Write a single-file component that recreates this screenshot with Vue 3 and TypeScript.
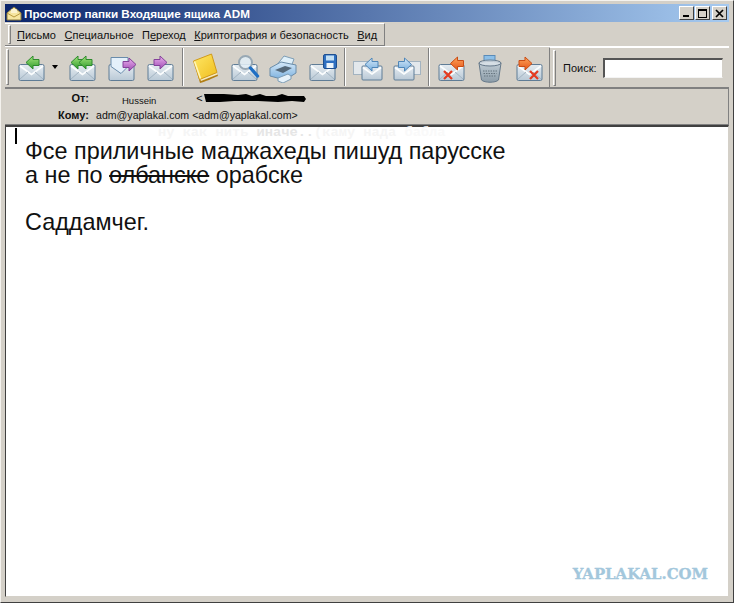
<script setup lang="ts">
const menu = [
  { before: '', key: 'П', after: 'исьмо' },
  { before: '', key: 'С', after: 'пециальное' },
  { before: 'П', key: 'е', after: 'реход' },
  { before: '', key: 'К', after: 'риптография и безопасность' },
  { before: '', key: 'В', after: 'ид' },
]

const groups = [
  ['reply', 'arrow', 'replyall', 'fwdinline', 'forward'],
  ['book', 'find', 'print', 'save'],
  ['prev', 'next'],
  ['delprev', 'trash', 'delnext'],
]
</script>

<template>
  <div class="window">
    <svg class="defs" width="0" height="0">
      <defs>
        <linearGradient id="gEnv" x1="0" y1="0" x2="0" y2="1">
          <stop offset="0" stop-color="#e6ecf1" />
          <stop offset="1" stop-color="#b9c9d6" />
        </linearGradient>
        <linearGradient id="gGreen" x1="0" y1="0" x2="0" y2="1">
          <stop offset="0" stop-color="#a6e67e" />
          <stop offset="1" stop-color="#2f9a2c" />
        </linearGradient>
        <linearGradient id="gPurple" x1="0" y1="0" x2="0" y2="1">
          <stop offset="0" stop-color="#eab0ee" />
          <stop offset="1" stop-color="#a04cb4" />
        </linearGradient>
        <linearGradient id="gBlue" x1="0" y1="0" x2="0" y2="1">
          <stop offset="0" stop-color="#d5e9f9" />
          <stop offset="1" stop-color="#78aedd" />
        </linearGradient>
        <linearGradient id="gOrange" x1="0" y1="0" x2="0" y2="1">
          <stop offset="0" stop-color="#ffa55a" />
          <stop offset="1" stop-color="#e4551a" />
        </linearGradient>
        <linearGradient id="gBook" x1="0" y1="0" x2="1" y2="1">
          <stop offset="0" stop-color="#ffe866" />
          <stop offset="1" stop-color="#efbd1e" />
        </linearGradient>
        <linearGradient id="gBin" x1="0" y1="0" x2="0" y2="1">
          <stop offset="0" stop-color="#c4d0d8" />
          <stop offset="1" stop-color="#8c9ca8" />
        </linearGradient>

        <g id="envShape">
          <rect x="4" y="13.5" width="25" height="16" rx="1.5" fill="url(#gEnv)" stroke="#5f7c96" />
          <path d="M5 15l11.5 8.5L28 15" fill="none" stroke="#fbfdfe" stroke-width="1.7" />
          <path d="M5 28l8-7M28 28l-8-7" fill="none" stroke="#a3b4c2" />
        </g>
        <g id="envSmall">
          <rect x="0.5" y="0.5" width="20" height="14" rx="1" fill="url(#gEnv)" stroke="#5f7c96" />
          <path d="M1.5 2l9 6.5 9-6.5" fill="none" stroke="#fbfdfe" stroke-width="1.6" />
        </g>
        <path id="arrL" d="M0 6.5L7 0v3.5h6v6H7V13z" stroke-linejoin="round" />
        <path id="arrR" d="M13 6.5L6 0v3.5H0v6h6V13z" stroke-linejoin="round" />
        <path id="cross" d="M0 0l8 8M8 0L0 8" fill="none" stroke="#e5391f" stroke-width="2.2" />

        <symbol id="reply" viewBox="0 0 32 32">
          <use href="#envShape" />
          <use href="#arrL" x="11" y="5" fill="url(#gGreen)" stroke="#2d8a2d" />
        </symbol>
        <symbol id="replyall" viewBox="0 0 32 32">
          <use href="#envShape" />
          <use href="#arrL" x="5" y="5" fill="url(#gGreen)" stroke="#2d8a2d" />
          <use href="#arrL" x="13" y="5" fill="url(#gGreen)" stroke="#2d8a2d" />
        </symbol>
        <symbol id="fwdinline" viewBox="0 0 32 32">
          <rect x="4" y="13.5" width="25" height="16" rx="1.5" fill="url(#gEnv)" stroke="#5f7c96" />
          <path d="M6 6.5h17v9l-7 7-10-7z" fill="#e4f0fa" stroke="#6a8cab" />
          <use href="#arrR" x="18" y="7" fill="url(#gPurple)" stroke="#84429a" />
        </symbol>
        <symbol id="forward" viewBox="0 0 32 32">
          <use href="#envShape" />
          <use href="#arrR" x="10" y="5" fill="url(#gPurple)" stroke="#84429a" />
        </symbol>
        <symbol id="book" viewBox="0 0 32 32">
          <path d="M5 11l6 21c5-1 13-5 18-7l-1-3z" fill="#b17e14" />
          <path d="M11 28l17-6.5.6 2L12 30z" fill="#f4e8c0" />
          <path d="M4.500 10L22.500 3 28 21.500 10.500 28.500z" fill="url(#gBook)" stroke="#d09a1c" />
          <path d="M5.500 10.500l6 17" stroke="#fff6b8" stroke-width="1.6" />
        </symbol>
        <symbol id="find" viewBox="0 0 32 32">
          <use href="#envShape" />
          <circle cx="17.500" cy="11.500" r="6.500" fill="#e2eef6" fill-opacity=".88" stroke="#98a8b4" stroke-width="2" />
          <path d="M22.500 17l7 8" stroke="#1f6fc4" stroke-width="3.400" stroke-linecap="round" />
        </symbol>
        <symbol id="print" viewBox="0 0 32 32">
          <path d="M9 15L17 5l10 3-3 8z" fill="#dff0fa" stroke="#7e9db5" />
          <path d="M3 17l11-6 15 3v8l-11 7-15-4z" fill="url(#gBlue)" stroke="#6a8ca8" stroke-linejoin="round" />
          <path d="M8 19l10-4 7 2-9 5z" fill="#55697a" />
          <path d="M11 27l10-4 3 2v3l-8 4-5-2z" fill="#e7f2fa" stroke="#7e9db5" />
        </symbol>
        <symbol id="save" viewBox="0 0 32 32">
          <use href="#envShape" />
          <rect x="17.500" y="3.500" width="13" height="14" rx="1.500" fill="#2f6fc0" stroke="#1e4f90" />
          <rect x="20" y="4.500" width="8" height="5" fill="#c4e0f4" />
          <rect x="20.500" y="12" width="7" height="5" fill="#edf4fa" />
        </symbol>
        <symbol id="prev" viewBox="0 0 32 32">
          <rect x="2.500" y="10.500" width="16" height="13" fill="#e3e8ec" stroke="#a3b3c0" />
          <use href="#envSmall" x="10.500" y="14.500" />
          <use href="#arrL" x="14" y="7" fill="url(#gBlue)" stroke="#4f86b8" />
        </symbol>
        <symbol id="next" viewBox="0 0 32 32">
          <rect x="14.500" y="10.500" width="16" height="13" fill="#e3e8ec" stroke="#a3b3c0" />
          <use href="#envSmall" x="3.500" y="14.500" />
          <use href="#arrR" x="8.500" y="7" fill="url(#gBlue)" stroke="#4f86b8" />
        </symbol>
        <symbol id="delprev" viewBox="0 0 32 32">
          <use href="#envShape" />
          <use href="#arrL" x="15.500" y="6" fill="url(#gOrange)" stroke="#c94c14" />
          <use href="#cross" x="9" y="20" />
        </symbol>
        <symbol id="trash" viewBox="0 0 32 32">
          <rect x="10" y="4.500" width="11" height="11" fill="#8cbfe8" stroke="#5a8bb8" />
          <path d="M5 12c3-2 19-2 22 0l-2.500 17c-3 3-14 3-17 0z" fill="url(#gBin)" stroke="#66798a" />
          <ellipse cx="16" cy="12" rx="11" ry="3" fill="#dfe7ec" fill-opacity=".7" stroke="#66798a" />
          <path d="M9 20h14M9.500 22.500h13M10 25h12" stroke="#66757f" stroke-dasharray="1.500 1" />
        </symbol>
        <symbol id="delnext" viewBox="0 0 32 32">
          <use href="#envShape" />
          <use href="#arrR" x="6" y="6" fill="url(#gOrange)" stroke="#c94c14" />
          <use href="#cross" x="17" y="20" />
        </symbol>
      </defs>
    </svg>

    <div class="titlebar">
      <svg class="title-ico" viewBox="0 0 16 16">
        <path d="M1 8l7-6 7 6v7H1z" fill="#f6e6a0" stroke="#8a7a40" />
        <path d="M1 8l7 4 7-4" fill="none" stroke="#b89a40" />
        <path d="M5 7h6M5 5h6" stroke="#fff" />
      </svg>
      <span class="title">Просмотр папки Входящие ящика ADM</span>
      <div class="win-btns">
        <button class="wbtn"><i class="min"></i></button>
        <button class="wbtn"><i class="max"></i></button>
        <button class="wbtn close">
          <svg viewBox="0 0 9 9" width="9" height="9"><path d="M1 1l7 7M8 1L1 8" stroke="#000" stroke-width="1.7" /></svg>
        </button>
      </div>
    </div>

    <div class="menu-row">
      <div class="menubar">
        <span class="handle"></span>
        <span v-for="m in menu" :key="m.after" class="menu-item">{{ m.before }}<u>{{ m.key }}</u>{{ m.after }}</span>
      </div>
    </div>

    <div class="toolbar">
      <div class="tools">
        <span class="handle tall"></span>
        <template v-for="(g, i) in groups" :key="i">
          <span v-if="i > 0" class="sep"></span>
          <div class="group">
            <template v-for="id in g" :key="id">
              <span v-if="id === 'arrow'" class="drop"></span>
              <svg v-else class="ico"><use :href="'#' + id" /></svg>
            </template>
          </div>
        </template>
      </div>
      <div class="search">
        <span class="handle tall"></span>
        <label>Поиск:</label>
        <input class="search-input" type="text" />
      </div>
    </div>

    <div class="head">
      <b>От:</b>
      <span class="from">
        <span class="name">Hussein</span>
        <span class="addr">&lt;</span>
        <svg class="scrib" viewBox="0 0 102 10" width="102" height="10">
          <path d="M0 1h20l14 1 8-1 6 2 8-2 6 2h10l6-2 6 2h16l2 3-2 3-12-1-14 1-20-1H30l-14 1H2z" fill="#000" />
        </svg>
      </span>
      <b>Кому:</b>
      <span class="to">adm@yaplakal.com &lt;adm@yaplakal.com&gt;</span>
    </div>

    <div class="body">
      <i class="caret"></i>
      <div class="ghost">ну как нить <em>иначе..</em>(каму нада <small>бабла</small></div>
      <p>Фсе приличные маджахеды пишуд парусске</p>
      <p>а не по <s>олбанске</s> орабске</p>
      <p class="sign">Саддамчег.</p>
      <span class="mark">YAPLAKAL.COM</span>
    </div>
  </div>
</template>

<style>
html, body { margin: 0; background: #d4d0c8; }
</style>

<style scoped>
.window {
  box-sizing: border-box;
  width: 734px;
  height: 603px;
  overflow: hidden;
  display: flex;
  flex-direction: column;
  padding: 3px 4px 5px 4px;
  background: #d4d0c8;
  border-top: 1px solid #f4f2ee;
  border-left: 1px solid #f4f2ee;
  border-right: 1px solid #404040;
  border-bottom: 1px solid #404040;
  font-family: "Liberation Sans", Arial, sans-serif;
  font-size: 11px;
  color: #111;
}
.defs { display: block; height: 0; }

.titlebar {
  flex: none;
  height: 18px;
  display: flex;
  align-items: center;
  padding: 0 2px 0 1px;
  background: linear-gradient(90deg, #0a246a, #a6caf0);
}
.title-ico { width: 16px; height: 16px; flex: none; }
.title {
  margin-left: 2px;
  font-size: 11.7px;
  font-weight: bold;
  color: #fff;
  white-space: nowrap;
}
.win-btns { margin-left: auto; display: flex; gap: 1px; }
.wbtn {
  box-sizing: border-box;
  width: 15px;
  height: 14px;
  padding: 0;
  display: flex;
  align-items: center;
  justify-content: center;
  background: #d4d0c8;
  border: 1px solid;
  border-color: #fff #404040 #404040 #fff;
}
.wbtn.close { margin-left: 1px; }
.min { display: block; width: 6px; height: 2px; background: #000; margin-top: 6px; margin-right: 2px; }
.max { display: block; box-sizing: border-box; width: 9px; height: 9px; border: 1px solid #000; border-top-width: 2px; }

.menu-row {
  flex: none;
  box-sizing: border-box;
  height: 25px;
  display: flex;
  align-items: flex-end;
  border-bottom: 1px solid #fff;
}
.menubar {
  height: 23px;
  width: 380px;
  box-sizing: border-box;
  display: flex;
  align-items: center;
  padding-left: 3px;
  border-top: 1px solid #fff;
  border-right: 1px solid #808080;
  border-bottom: 1px solid #808080;
}
.handle {
  flex: none;
  display: block;
  width: 1px;
  height: 17px;
  border: 1px solid;
  border-color: #fff #808080 #808080 #fff;
  margin-right: 6px;
}
.handle.tall { height: 34px; margin-right: 2px; }
.menu-item { margin-right: 8.5px; white-space: nowrap; }

.toolbar {
  flex: none;
  box-sizing: border-box;
  height: 42px;
  display: flex;
  align-items: center;
  border-bottom: 2px solid #808080;
}
.tools { display: flex; align-items: center; flex: none; width: 541px; padding-left: 1px; box-sizing: border-box; }
.group { display: flex; align-items: center; }
.ico { width: 32px; height: 32px; margin: 0 3.5px; flex: none; }
.drop {
  flex: none;
  width: 0;
  height: 0;
  margin: 0 4px 0 2px;
  border: 3px solid transparent;
  border-top: 4px solid #000;
  border-bottom: 0;
}
.sep {
  flex: none;
  width: 1px;
  height: 38px;
  margin: 0 1px 0 3px;
  background: #808080;
  border-right: 1px solid #fff;
}
.search {
  flex: 1;
  display: flex;
  align-items: center;
  height: 40px;
  border-left: 1px solid #808080;
  border-top: 1px solid #fff;
  padding-left: 3px;
  margin-left: 3px;
}
.search .handle.tall { margin-right: 4px; }
.search label { margin-left: 3px; white-space: nowrap; }
.search-input {
  box-sizing: border-box;
  width: 120px;
  height: 20px;
  margin-left: 6px;
  padding: 0;
  background: #fff;
  border: 1px solid;
  border-color: #555 #d4d0c8 #f4f4f4 #555;
  border-top-width: 2px;
  border-left-width: 2px;
}

.head {
  flex: none;
  box-sizing: border-box;
  height: 36px;
  display: grid;
  grid-template-columns: 84px 1fr;
  grid-template-rows: 17px 17px;
  column-gap: 7px;
  align-items: center;
  border-bottom: 1px solid #808080;
  border-right: 1px solid #808080;
}
.head b { justify-self: end; }
.from { display: flex; align-items: center; padding-left: 26px; font-size: 9.5px; }
.name { margin-top: 6px; }
.addr { margin-left: 40px; font-size: 11px; }
.scrib { margin-left: 1px; }
.to { white-space: nowrap; font-size: 10.6px; }

.body {
  position: relative;
  flex: 1;
  background: #fff;
  border: 1px solid;
  border-color: #404040 #d4d0c8 #d4d0c8 #404040;
  border-top-width: 2px;
  font-size: 23.4px;
  line-height: 24px;
  color: #111;
}
.body p { margin: 0 0 0 19px; white-space: nowrap; }
.body .sign { margin-top: 23px; }
.caret {
  position: absolute;
  left: 9px;
  top: 1px;
  width: 2px;
  height: 16px;
  background: #000;
}
.ghost {
  height: 12px;
  margin-left: 152px;
  font-family: "Liberation Mono", monospace;
  font-weight: bold;
  font-size: 13.7px;
  line-height: 12px;
  color: #f5f5f5;
  white-space: nowrap;
}
.ghost em { font-style: normal; color: #e6e6e6; }
.ghost small { font-size: inherit; color: #f9f9f9; }
.mark {
  position: absolute;
  right: 20px;
  bottom: 15px;
  font-family: "DejaVu Serif", serif;
  font-weight: bold;
  font-size: 14.9px;
  line-height: 14px;
  color: #a3c7dc;
  -webkit-text-stroke: 0.3px #a3c7dc;
  white-space: nowrap;
}
</style>
